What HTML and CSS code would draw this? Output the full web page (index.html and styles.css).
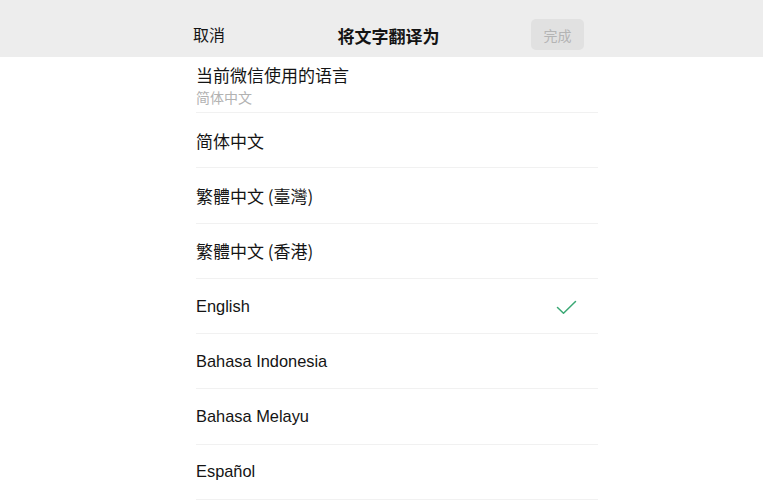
FILE: index.html
```html
<!DOCTYPE html>
<html lang="zh-CN">
<head>
    <meta charset="UTF-8">
    <meta name="viewport" content="width=device-width, initial-scale=1.0">
    <title>将文字翻译为</title>
    <link rel="stylesheet" href="styles.css">
</head>
<body>
    <header class="top-bar">
        <div class="top-inner">
            <span class="cancel">取消</span>
            <h1 class="title">将文字翻译为</h1>
            <button class="done" disabled>完成</button>
        </div>
    </header>

    <ul class="lang-list">
        <li class="lang-item current">
            <span class="lang-name cjk">当前微信使用的语言</span>
            <span class="lang-sub">简体中文</span>
        </li>
        <li class="lang-item"><span class="lang-name cjk">简体中文</span></li>
        <li class="lang-item"><span class="lang-name cjk">繁體中文 (臺灣)</span></li>
        <li class="lang-item"><span class="lang-name cjk">繁體中文 (香港)</span></li>
        <li class="lang-item selected">
            <span class="lang-name">English</span>
            <svg class="check" width="21" height="15" viewBox="0 0 21 15">
                <path d="M1.5 7.5 L7.5 13.2 L19.5 1.5" fill="none" stroke="#3aa874" stroke-width="1.5" stroke-linecap="round" stroke-linejoin="round"/>
            </svg>
        </li>
        <li class="lang-item"><span class="lang-name">Bahasa Indonesia</span></li>
        <li class="lang-item"><span class="lang-name">Bahasa Melayu</span></li>
        <li class="lang-item"><span class="lang-name">Español</span></li>
    </ul>
</body>
</html>
```

FILE: styles.css
```css
body {
    margin: 0;
    padding: 0;
    background: #fff;
    color: #141414;
    font-family: "Liberation Sans", "Noto Sans CJK SC", sans-serif;
}

.top-bar {
    background: #ededed;
    height: 57px;
}

.top-inner {
    margin-left: 193px;
    width: 391px;
    height: 100%;
    display: flex;
    align-items: center;
    justify-content: space-between;
    position: relative;
}

.cancel {
    font-size: 16px;
    font-family: "Noto Sans CJK SC", sans-serif;
    padding-top: 10px;
}

.title {
    margin: 0;
    font-size: 17px;
    font-weight: bold;
    font-family: "Noto Sans CJK SC", sans-serif;
    position: absolute;
    left: 50%;
    top: 35px;
    transform: translate(-50%, -50%);
}

.done {
    width: 53px;
    height: 31px;
    margin-top: 12px;
    border: none;
    border-radius: 5px;
    background: #e1e1e1;
    color: #b4b4b4;
    font-size: 14px;
    font-family: "Noto Sans CJK SC", sans-serif;
    padding: 0;
}

.lang-list {
    list-style: none;
    margin: 0 0 0 196px;
    padding: 0;
    width: 402px;
}

.lang-item {
    height: 54.3px;
    border-bottom: 1px solid #f1f1f1;
    display: flex;
    align-items: center;
    justify-content: space-between;
    padding-right: 21px;
}

.lang-item.current {
    height: 55px;
    flex-direction: column;
    align-items: flex-start;
    justify-content: flex-start;
}

.lang-name {
    font-size: 16.4px;
}

.lang-name.cjk {
    font-size: 17px;
    font-family: "Noto Sans CJK SC", sans-serif;
}

.current .lang-name {
    margin-top: 5px;
    line-height: 25px;
}

.lang-sub {
    font-size: 14px;
    line-height: 20.4px;
    color: #b2b2b2;
    font-family: "Noto Sans CJK SC", sans-serif;
}

.check {
    margin-top: 2px;
}
```
